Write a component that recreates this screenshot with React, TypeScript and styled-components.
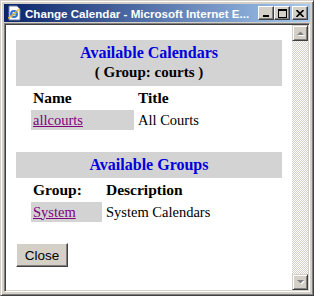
import React from 'react';
import styled, { createGlobalStyle } from 'styled-components';

const GlobalStyle = createGlobalStyle`
  html, body {
    margin: 0;
    padding: 0;
    background: #d4d0c8;
  }
`;

const Window = styled.div`
  width: 314px;
  height: 296px;
  box-sizing: border-box;
  background: #d4d0c8;
  border-top: 1px solid #d4d0c8;
  border-left: 1px solid #d4d0c8;
  border-right: 1px solid #404040;
  border-bottom: 1px solid #404040;
  box-shadow: inset 1px 1px 0 #ffffff, inset -1px -1px 0 #808080;
  padding: 3px;
  display: flex;
  flex-direction: column;
`;

const TitleBar = styled.div`
  height: 18px;
  display: flex;
  align-items: center;
  padding: 0 2px 0 2px;
  background: linear-gradient(to right, #0a246a, #a6caf0);
  color: #ffffff;
  font-family: 'Liberation Sans', Arial, sans-serif;
  font-weight: bold;
  font-size: 11.6px;
  white-space: nowrap;
  overflow: hidden;
`;

const TitleText = styled.span`
  flex: 1;
  margin-left: 3px;
`;

const CaptionButton = styled.div<{ $gap?: boolean }>`
  width: 16px;
  height: 14px;
  box-sizing: border-box;
  margin-left: ${p => (p.$gap ? '2px' : '0')};
  background: #d4d0c8;
  border-top: 1px solid #ffffff;
  border-left: 1px solid #ffffff;
  border-right: 1px solid #404040;
  border-bottom: 1px solid #404040;
  box-shadow: inset -1px -1px 0 #808080;
  display: flex;
  align-items: center;
  justify-content: center;
`;

const Client = styled.div`
  flex: 1;
  margin-top: 1px;
  display: flex;
  border-top: 1px solid #808080;
  border-left: 1px solid #808080;
  border-right: 1px solid #ffffff;
  border-bottom: 1px solid #ffffff;
  box-shadow: inset 1px 1px 0 #404040, inset -1px -1px 0 #d4d0c8;
  padding: 1px;
  min-height: 0;
`;

const Page = styled.div`
  flex: 1;
  background: #ffffff;
  padding: 15px 10px 0 10px;
  font-family: 'Liberation Serif', 'Times New Roman', serif;
  color: #000000;
  overflow: hidden;
`;

const Header = styled.div<{ $tall?: boolean }>`
  background: #d3d3d3;
  text-align: center;
  height: ${p => (p.$tall ? '46px' : '26px')};
  box-sizing: border-box;
  padding-top: 3px;
`;

const HeaderTitle = styled.div`
  color: #0000dd;
  font-weight: bold;
  font-size: 16px;
  line-height: 20px;
`;

const HeaderSub = styled.div`
  font-weight: bold;
  font-size: 15px;
  line-height: 19px;
`;

const Table = styled.div<{ $first: number }>`
  display: grid;
  grid-template-columns: ${p => p.$first}px auto;
  grid-auto-rows: 20px;
  gap: 2px 2px;
  padding: 2px 0 0 15px;
  align-items: stretch;
`;

const HeadCell = styled.div`
  font-weight: bold;
  font-size: 15.5px;
  padding-left: 2px;
  display: flex;
  align-items: center;
`;

const Cell = styled.div<{ $shaded?: boolean }>`
  font-size: 14.5px;
  padding-left: 2px;
  display: flex;
  align-items: center;
  background: ${p => (p.$shaded ? '#d3d3d3' : 'transparent')};
`;

const Link = styled.a`
  color: #800080;
  text-decoration: underline;
`;

const Spacer = styled.div<{ $h: number }>`
  height: ${p => p.$h}px;
`;

const Button = styled.button`
  display: block;
  width: 52px;
  height: 24px;
  box-sizing: border-box;
  padding: 0;
  background: #d4d0c8;
  font-family: 'Liberation Sans', Arial, sans-serif;
  font-size: 13.5px;
  color: #000000;
  border-top: 1px solid #ffffff;
  border-left: 1px solid #ffffff;
  border-right: 1px solid #404040;
  border-bottom: 1px solid #404040;
  box-shadow: inset -1px -1px 0 #808080;
`;

const Scrollbar = styled.div`
  width: 16px;
  display: flex;
  flex-direction: column;
  background: repeating-conic-gradient(#ffffff 0 25%, #d4d0c8 0 50%) 0 0 / 2px 2px;
`;

const Track = styled.div`
  flex: 1;
`;

const ScrollButton = styled.div`
  width: 16px;
  height: 16px;
  box-sizing: border-box;
  background: #d4d0c8;
  border-top: 1px solid #d4d0c8;
  border-left: 1px solid #d4d0c8;
  border-right: 1px solid #404040;
  border-bottom: 1px solid #404040;
  box-shadow: inset 1px 1px 0 #ffffff, inset -1px -1px 0 #808080;
  display: flex;
  align-items: center;
  justify-content: center;
`;

const Arrow = ({ down }: { down?: boolean }) => (
  <svg width="9" height="6" viewBox="0 0 9 6">
    <polygon points={down ? '1,1 8,1 4.5,4.5' : '1,5 8,5 4.5,1.5'} fill="#ffffff" transform="translate(1,1)" />
    <polygon points={down ? '1,1 8,1 4.5,4.5' : '1,5 8,5 4.5,1.5'} fill="#808080" />
  </svg>
);

const IeIcon = () => (
  <svg width="16" height="16" viewBox="0 0 16 16">
    <path d="M3 1 H11 L14 4 V15 H3 Z" fill="#ffffff" stroke="#6a7fa8" strokeWidth="1" />
    <circle cx="8" cy="9" r="4" fill="#2f6fd8" />
    <circle cx="8" cy="9" r="2" fill="#ffffff" />
    <rect x="5.5" y="8.5" width="5" height="1.2" fill="#2f6fd8" />
    <path d="M2 13 C5 11 10 6 13 4 C12 8 6 12 2 13 Z" fill="none" stroke="#f0c030" strokeWidth="1" />
  </svg>
);

export default function App() {
  return (
    <>
      <GlobalStyle />
      <Window>
        <TitleBar>
          <IeIcon />
          <TitleText>Change Calendar - Microsoft Internet E...</TitleText>
          <CaptionButton>
            <svg width="8" height="8" viewBox="0 0 8 8">
              <rect x="1" y="6" width="6" height="2" fill="#000" />
            </svg>
          </CaptionButton>
          <CaptionButton>
            <svg width="9" height="9" viewBox="0 0 9 9">
              <rect x="0.5" y="0.5" width="8" height="8" fill="none" stroke="#000" />
              <rect x="0" y="0" width="9" height="2" fill="#000" />
            </svg>
          </CaptionButton>
          <CaptionButton $gap>
            <svg width="8" height="7" viewBox="0 0 8 7">
              <path d="M0.5 0 L7.5 7 M7.5 0 L0.5 7" stroke="#000" strokeWidth="1.6" />
            </svg>
          </CaptionButton>
        </TitleBar>
        <Client>
          <Page>
            <Header $tall>
              <HeaderTitle>Available Calendars</HeaderTitle>
              <HeaderSub>( Group: courts )</HeaderSub>
            </Header>
            <Table $first={103}>
              <HeadCell>Name</HeadCell>
              <HeadCell>Title</HeadCell>
              <Cell $shaded>
                <Link href="#">allcourts</Link>
              </Cell>
              <Cell>All Courts</Cell>
            </Table>
            <Spacer $h={22} />
            <Header>
              <HeaderTitle>Available Groups</HeaderTitle>
            </Header>
            <Table $first={71}>
              <HeadCell>Group:</HeadCell>
              <HeadCell>Description</HeadCell>
              <Cell $shaded>
                <Link href="#">System</Link>
              </Cell>
              <Cell>System Calendars</Cell>
            </Table>
            <Spacer $h={21} />
            <Button>Close</Button>
          </Page>
          <Scrollbar>
            <ScrollButton>
              <Arrow />
            </ScrollButton>
            <Track />
            <ScrollButton>
              <Arrow down />
            </ScrollButton>
          </Scrollbar>
        </Client>
      </Window>
    </>
  );
}
